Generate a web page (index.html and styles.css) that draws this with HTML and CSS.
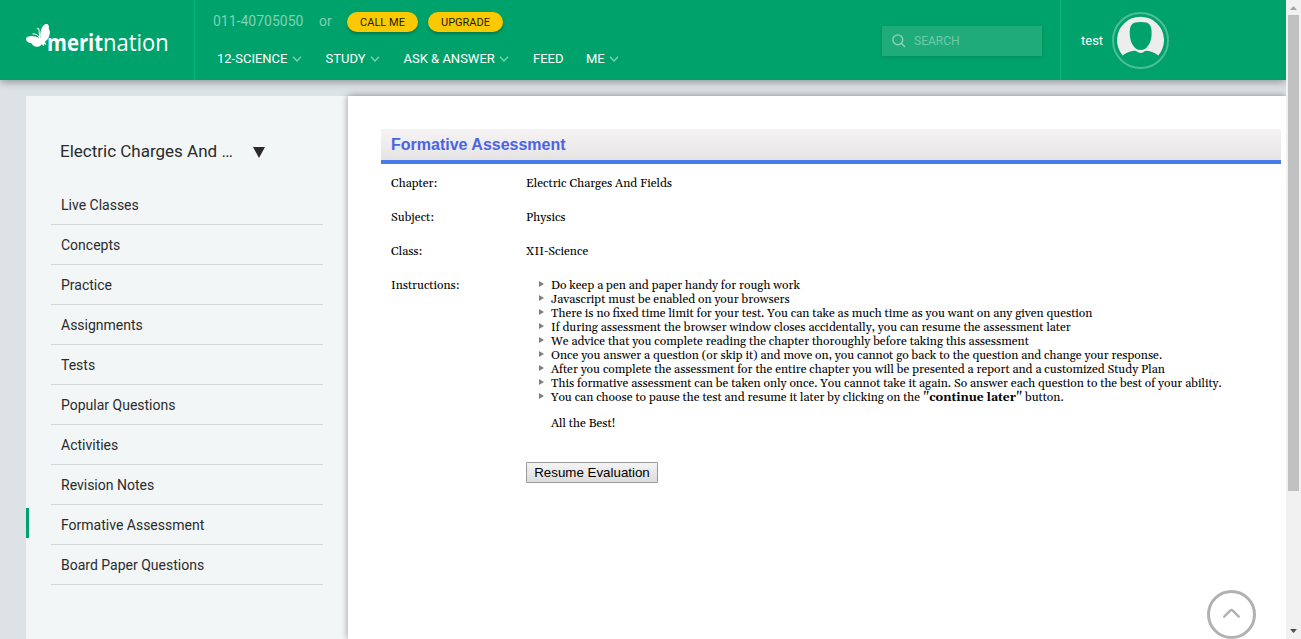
FILE: index.html
```html
<!DOCTYPE html>
<html lang="en">
<head>
<meta charset="utf-8">
<title>Formative Assessment</title>
<link rel="stylesheet" href="styles.css">
</head>
<body>
<div class="window">
  <div class="page">
    <header class="header">
      <div class="brand">
        <svg class="butterfly" width="25" height="26" viewBox="0 0 25 26">
          <path fill="#fff" d="M14.500 15.500C13.500 10 15.500 2 19.800 1c3-.4 3.500 2.500 3 5 2 2.500.8 6.500-.2 8.500-.8 2-2.200 3.300-3.600 4 .2 1.500 1 2.200 1.500 3.500l-2.300-1-.6 2.200-1.600-2C15 21.500 14 24 11 23.800c-3 0-4.500-1.500-5.200-3.300C2.500 20.300 0 18 0 15.800c.3-3.800 9.500-3.600 14.500-.3z"/>
          <path fill="none" stroke="#fff" stroke-width="1" d="M15 17.500C12.300 13.500 13.800 9 12.800 5.800c-.6-1.400-2-.5-1.600.5M14 15.500c-1.500-3.200-4-5-7.500-4.600"/>
        </svg>
        <span class="word word-merit">merit</span><span class="word word-nation">nation</span>
      </div>
      <div class="nav-area">
        <div class="contact">
          <span class="phone">011-40705050</span><span class="or">or</span>
          <a class="pill pill-call">CALL ME</a><a class="pill pill-up">UPGRADE</a>
        </div>
        <nav class="nav">
          <a class="n1">12-SCIENCE<svg class="chev" viewBox="0 0 10 6"><path d="M1 .7l4 4.300 4-4.300"/></svg></a>
          <a class="n2">STUDY<svg class="chev" viewBox="0 0 10 6"><path d="M1 .7l4 4.300 4-4.300"/></svg></a>
          <a class="n3">ASK &amp; ANSWER<svg class="chev" viewBox="0 0 10 6"><path d="M1 .7l4 4.300 4-4.300"/></svg></a>
          <a class="n4">FEED</a>
          <a>ME<svg class="chev" viewBox="0 0 10 6"><path d="M1 .7l4 4.300 4-4.300"/></svg></a>
        </nav>
      </div>
      <div class="search">
        <svg width="14" height="14" viewBox="0 0 14 14"><g fill="none" stroke="#8fd3b8" stroke-width="1.400"><circle cx="5.800" cy="5.800" r="4.900"/><path d="M9.300 9.300l3.700 3.700"/></g></svg>
        <span class="search-text">SEARCH</span>
      </div>
      <div class="user">
        <span class="user-name">test</span>
        <svg class="avatar" width="57" height="57" viewBox="0 0 57 57">
          <circle cx="28.500" cy="28.500" r="27.500" fill="none" stroke="#4dbd94" stroke-width="2"/>
          <path fill="#ededed" d="M10.700 43.500A23.500 23.500 0 1 1 46.300 43.500Q41 39.400 34.500 38.800L33 39Q28.800 43 24 39L22.500 38.800Q16 39.400 10.700 43.500z"/>
          <path fill="#00a26b" d="M17.800 22.500C17.400 12.500 20 10 28.700 10S40 12.500 39.600 22.500C39.400 30 35.500 38 28.700 38S18 30 17.800 22.500z"/>
        </svg>
      </div>
    </header>
    <div class="columns">
      <aside class="sidebar">
        <div class="chapter"><span class="chapter-name">Electric Charges And …</span><svg class="caret" width="12" height="11" viewBox="0 0 12 11"><path fill="#2b2b2b" d="M0 0h12L6 11z"/></svg></div>
        <ul class="menu">
          <li>Live Classes</li>
          <li>Concepts</li>
          <li>Practice</li>
          <li>Assignments</li>
          <li>Tests</li>
          <li>Popular Questions</li>
          <li>Activities</li>
          <li>Revision Notes</li>
          <li class="active">Formative Assessment</li>
          <li>Board Paper Questions</li>
        </ul>
      </aside>
      <main class="content">
        <h1 class="title">Formative Assessment</h1>
        <dl class="details">
          <dt>Chapter:</dt><dd>Electric Charges And Fields</dd>
          <dt>Subject:</dt><dd>Physics</dd>
          <dt>Class:</dt><dd>XII-Science</dd>
          <dt>Instructions:</dt>
          <dd>
            <ul class="rules">
              <li>Do keep a pen and paper handy for rough work</li>
              <li>Javascript must be enabled on your browsers</li>
              <li>There is no fixed time limit for your test. You can take as much time as you want on any given question</li>
              <li>If during assessment the browser window closes accidentally, you can resume the assessment later</li>
              <li>We advice that you complete reading the chapter thoroughly before taking this assessment</li>
              <li>Once you answer a question (or skip it) and move on, you cannot go back to the question and change your response.</li>
              <li>After you complete the assessment for the entire chapter you will be presented a report and a customized Study Plan</li>
              <li>This formative assessment can be taken only once. You cannot take it again. So answer each question to the best of your ability.</li>
              <li>You can choose to pause the test and resume it later by clicking on the <b>"continue later"</b> button.</li>
            </ul>
            <p class="best">All the Best!</p>
            <button class="resume">Resume Evaluation</button>
          </dd>
        </dl>
        <svg class="to-top" width="49" height="49" viewBox="0 0 49 49"><g fill="none" stroke="#b1b1b1"><circle cx="24.500" cy="24.500" r="23" stroke-width="3"/><path d="M17.200 26.600l6-6q1.300-1 2.600 0l6 6" stroke-width="2.400" stroke-linecap="round"/></g></svg>
      </main>
    </div>
  </div>
  <div class="scrollbar">
    <svg width="15" height="15" viewBox="0 0 15 15"><path fill="#a3a3a3" d="M4 10l3.500-4L11 10z"/></svg>
    <div class="thumb"></div>
    <svg width="15" height="15" viewBox="0 0 15 15"><path fill="#505050" d="M4 5h7L7.500 9z"/></svg>
  </div>
</div>
</body>
</html>
```
FILE: styles.css
```css
* { box-sizing: border-box; }
body { margin: 0; font-family: Roboto, sans-serif; overflow: hidden; }
.window { display: flex; width: 1301px; height: 639px; }
.page { width: 1286px; height: 639px; background: #dde2e6; display: flex; flex-direction: column; overflow: hidden; }
.header { display: flex; height: 80px; flex: none; background: #00a26b; color: #fff; box-shadow: 0 2px 8px rgba(0,0,0,.35); position: relative; z-index: 2; }
.brand { display: flex; width: 195px; border-right: 1px solid #00b97a; padding: 23px 0 0 26px; }
.butterfly { flex: none; margin-right: -4px; }
.word { font: 24px/34px "Open Sans", sans-serif; transform-origin: 0 0; margin-top: 2px; flex: none; }
.word-merit { width: 56px; font-weight: 700; transform: scaleX(.845); }
.word-nation { width: 66px; transform: scaleX(.915); }
.nav-area { width: 687px; padding: 11px 0 0 18px; }
.contact { display: flex; height: 21px; line-height: 20px; font-size: 14px; color: #80d0b5; }
.phone { width: 106px; }
.or { width: 28px; }
.pill { height: 20px; margin-top: 1px; border-radius: 10px; background: #fbc900; color: #1c1c0c; font-size: 11px; line-height: 21px; text-align: center; box-shadow: 0 2px 3px rgba(0,0,0,.25); }
.pill-call { width: 71px; margin-right: 10px; }
.pill-up { width: 75px; }
.nav { display: flex; padding: 19px 0 0 4px; font-size: 13px; line-height: 16px; }
.nav a { display: flex; align-items: center; white-space: nowrap; }
.n1 { width: 108.500px; }
.n2 { width: 78px; }
.n3 { width: 129.500px; }
.n4 { width: 53px; }
.chev { width: 10px; height: 6px; margin: 0 0 0 4.500px; fill: none; stroke: #80d0b5; stroke-width: 1.300; }
.search { width: 160px; height: 30px; margin-top: 26px; background: #1fac7a; display: flex; align-items: center; padding-left: 10px; box-shadow: 0 1px 4px rgba(0,0,0,.12); }
.search-text { margin-left: 8px; font-size: 12px; color: #71c9a9; }
.user { margin-left: 18px; width: 226px; border-left: 1px solid #00b97a; display: flex; align-items: center; padding-left: 20px; }
.user-name { font-size: 13px; width: 31px; }
.avatar { flex: none; }
.columns { display: flex; flex: 1; margin: 16px 0 0 26px; min-height: 0; }
.sidebar { width: 322px; background: #f2f6f7; }
.chapter { display: flex; align-items: center; height: 24px; margin: 43px 0 0 34px; font-size: 17px; color: #2b2b2b; }
.chapter-name { width: 193px; }
.caret { margin-top: 2px; }
.menu { list-style: none; margin: 22px 25px 0; padding: 0; width: 272px; }
.menu li { height: 40px; line-height: 40px; padding-left: 10px; border-bottom: 1px solid #d2d6d7; font-size: 14px; color: #2b2b2b; position: relative; }
.active::before { content: ""; position: absolute; left: -25px; top: 3px; width: 3px; height: 30px; background: #00a26b; }
.content { flex: 1; background: #fff; box-shadow: 0 0 7px rgba(0,0,0,.4); padding: 33px 5px 0 33px; position: relative; z-index: 1; }
.title { margin: 0; height: 35px; padding-left: 10px; font: bold 16px/31px "Liberation Sans", Arial, sans-serif; color: #4a64e4; background: linear-gradient(#f5f3f4, #e6e4e3); border-bottom: 4px solid #487ae8; }
.details { margin: 13px 0 0; padding-left: 10px; display: grid; grid-template-columns: 135px 1fr; row-gap: 20px; font: 12px/14px Georgia, Gelasio, "Liberation Serif", serif; color: #000; }
.details dd { margin: 0; }
.rules { list-style: none; margin: 0; padding: 0 0 0 25px; }
.rules li { position: relative; white-space: nowrap; }
.rules li::before { content: ""; position: absolute; left: -12px; top: 2px; border: 3.500px solid transparent; border-left: 5px solid #808080; border-right: 0; }
.best { margin: 12px 0 0 25px; }
.resume { display: block; margin-top: 31px; width: 132px; height: 21px; padding: 0; border: 1px solid #9a9a9a; border-radius: 1px; background: linear-gradient(#f4f4f4, #dcdcdc); font: 13.333px "Liberation Sans", Arial, sans-serif; color: #000; }
.to-top { position: absolute; left: 859px; top: 494px; }
.scrollbar { width: 15px; background: #f1f1f1; display: flex; flex-direction: column; }
.thumb { width: 11px; height: 476px; margin: 0 0 133px 2px; background: #c1c1c1; }
.scrollbar svg { flex: none; display: block; }
```
